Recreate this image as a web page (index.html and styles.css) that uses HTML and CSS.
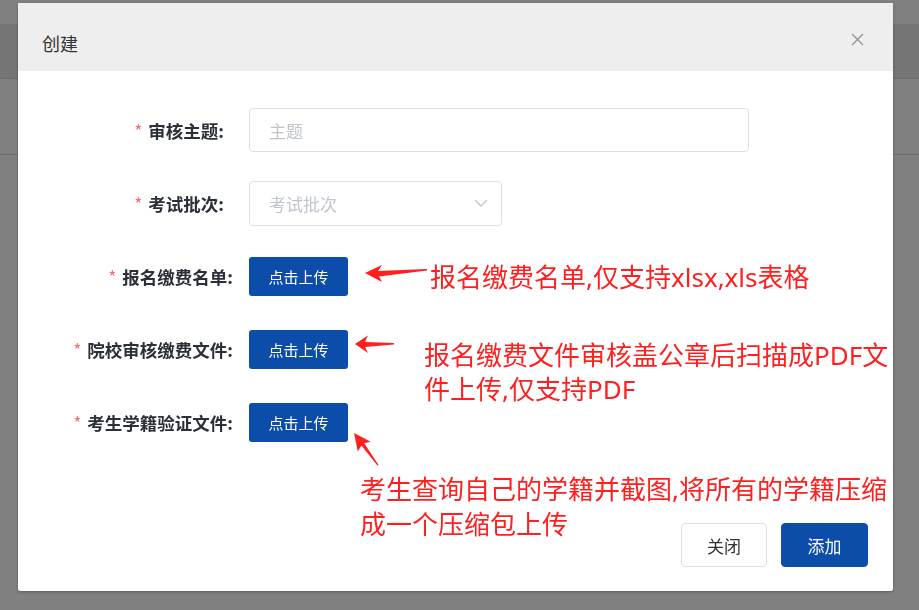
FILE: index.html
```html
<!DOCTYPE html>
<html lang="zh-CN">
<head>
    <meta charset="UTF-8">
    <meta name="viewport" content="width=device-width, initial-scale=1.0">
    <title>创建</title>
    <link rel="stylesheet" href="styles.css">
</head>
<body>

    <!-- Page behind the modal -->
    <div class="page-bg">
        <div class="bg-header"></div>
        <div class="bg-row"></div>
    </div>

    <!-- Modal -->
    <div class="overlay">
        <div class="dialog">
            <div class="dialog-header">
                <span class="dialog-title">创建</span>
                <svg class="close-icon" width="13" height="13" viewBox="0 0 13 13">
                    <path d="M1 1 L12 12 M12 1 L1 12" stroke="#909399" stroke-width="1.3" fill="none"/>
                </svg>
            </div>

            <div class="dialog-body">
                <div class="form-row">
                    <label class="form-label form-label-inset"><span class="required">*</span>审核主题:</label>
                    <div class="form-input">主题</div>
                </div>
                <div class="form-row">
                    <label class="form-label form-label-inset"><span class="required">*</span>考试批次:</label>
                    <div class="form-select">
                        <span>考试批次</span>
                        <svg width="14" height="8" viewBox="0 0 14 8">
                            <path d="M1 1 L7 7 L13 1" stroke="#c0c4cc" stroke-width="1.3" fill="none"/>
                        </svg>
                    </div>
                </div>
                <div class="form-row">
                    <label class="form-label"><span class="required">*</span>报名缴费名单:</label>
                    <button class="upload-btn">点击上传</button>
                </div>
                <div class="form-row">
                    <label class="form-label"><span class="required">*</span>院校审核缴费文件:</label>
                    <button class="upload-btn">点击上传</button>
                </div>
                <div class="form-row">
                    <label class="form-label"><span class="required">*</span>考生学籍验证文件:</label>
                    <button class="upload-btn">点击上传</button>
                </div>
            </div>

            <div class="dialog-footer">
                <button class="btn btn-default">关闭</button>
                <button class="btn btn-primary">添加</button>
            </div>

            <!-- Red annotations drawn over the form -->
            <div class="note note-1">报名缴费名单,仅支持xlsx,xls表格</div>
            <div class="note note-2">报名缴费文件审核盖公章后扫描成PDF文<br>件上传,仅支持PDF</div>
            <div class="note note-3">考生查询自己的学籍并截图,将所有的学籍压缩<br>成一个压缩包上传</div>

            <svg class="arrows" viewBox="18 3 875 588" width="875" height="588">
                <path d="M365 273 L382 265 L378 271 L427 269 L427 270.6 L379 276.5 L382 282 Z" fill="#ff1f1f"/>
                <path d="M355 344 L368 335.5 L365 342 L394 343 L394 344.6 L365 347 L368 353 Z" fill="#ff1f1f"/>
                <path d="M354 433 L370.6 441.8 L364.2 443.2 L378.6 465 L377.4 465.4 L361.4 445.6 L357.8 451.6 Z" fill="#ff1f1f"/>
            </svg>
        </div>
    </div>

</body>
</html>
```

FILE: styles.css
```css
body {
    margin: 0;
    width: 919px;
    height: 610px;
    overflow: hidden;
    background-color: #808080;
    font-family: "Noto Sans CJK SC", sans-serif;
}

/* Page behind the modal */
.page-bg {
    padding-top: 24px;
}

.bg-header {
    height: 54px;
    background-color: #757575;
    border-bottom: 1px solid #6e6e6e;
}

.bg-row {
    height: 75px;
    border-bottom: 1px solid #6f6f6f;
}

/* Modal */
.overlay {
    position: fixed;
    top: 0;
    left: 0;
    right: 0;
    bottom: 0;
    padding: 3px 0 0 18px;
}

.dialog {
    position: relative;
    width: 875px;
    height: 588px;
    background-color: white;
    border-radius: 2px;
    box-shadow: 0 1px 3px rgba(0, 0, 0, 0.3);
    display: flex;
    flex-direction: column;
}

.dialog-header {
    height: 68px;
    box-sizing: border-box;
    padding: 28px 29px 0 24px;
    background-color: #eeeeee;
    display: flex;
    justify-content: space-between;
    align-items: flex-start;
}

.dialog-title {
    font-size: 18px;
    line-height: 24px;
    color: #303133;
}

.close-icon {
    margin-top: 2px;
}

.dialog-body {
    padding: 37px 0 0 25px;
}

.form-row {
    display: flex;
    align-items: center;
    height: 44px;
    margin-bottom: 29px;
}

.form-label {
    width: 206px;
    box-sizing: border-box;
    padding-right: 16px;
    text-align: right;
    font-size: 17.5px;
    font-weight: bold;
    color: #2a2f38;
}

.form-label-inset {
    padding-right: 25px;
}

.required {
    color: #f56c6c;
    font-weight: normal;
    margin-right: 6px;
}

.form-input,
.form-select {
    height: 44px;
    box-sizing: border-box;
    border: 1px solid #dcdfe6;
    border-radius: 4px;
    padding: 0 13px 0 19px;
    display: flex;
    align-items: center;
    font-size: 17px;
    color: #c0c4cc;
}

.form-input {
    width: 500px;
}

.form-select {
    width: 253px;
    height: 45px;
    justify-content: space-between;
}

.upload-btn {
    width: 99px;
    height: 39px;
    border: none;
    border-radius: 3px;
    background-color: #0c4daa;
    color: white;
    font-family: inherit;
    font-size: 15px;
    padding: 0;
}

.dialog-footer {
    margin-top: auto;
    padding: 0 25px 24px 0;
    display: flex;
    justify-content: flex-end;
    gap: 14px;
}

.btn {
    height: 44px;
    border-radius: 4px;
    font-family: inherit;
    font-size: 17px;
    padding: 0;
}

.btn-default {
    width: 86px;
    background-color: white;
    border: 1px solid #dcdfe6;
    color: #303133;
}

.btn-primary {
    width: 87px;
    background-color: #0c4daa;
    border: 1px solid #0c4daa;
    color: white;
}

/* Annotations */
.note {
    position: absolute;
    font-family: "Noto Sans", "Noto Sans CJK SC", sans-serif;
    font-size: 26px;
    line-height: 34px;
    color: #ff1f1f;
    white-space: nowrap;
}

.note-1 {
    left: 412px;
    top: 257px;
}

.note-2 {
    left: 406px;
    top: 335px;
}

.note-3 {
    left: 342px;
    top: 469px;
    line-height: 35px;
}

.arrows {
    position: absolute;
    top: 0;
    left: 0;
    pointer-events: none;
}
```
